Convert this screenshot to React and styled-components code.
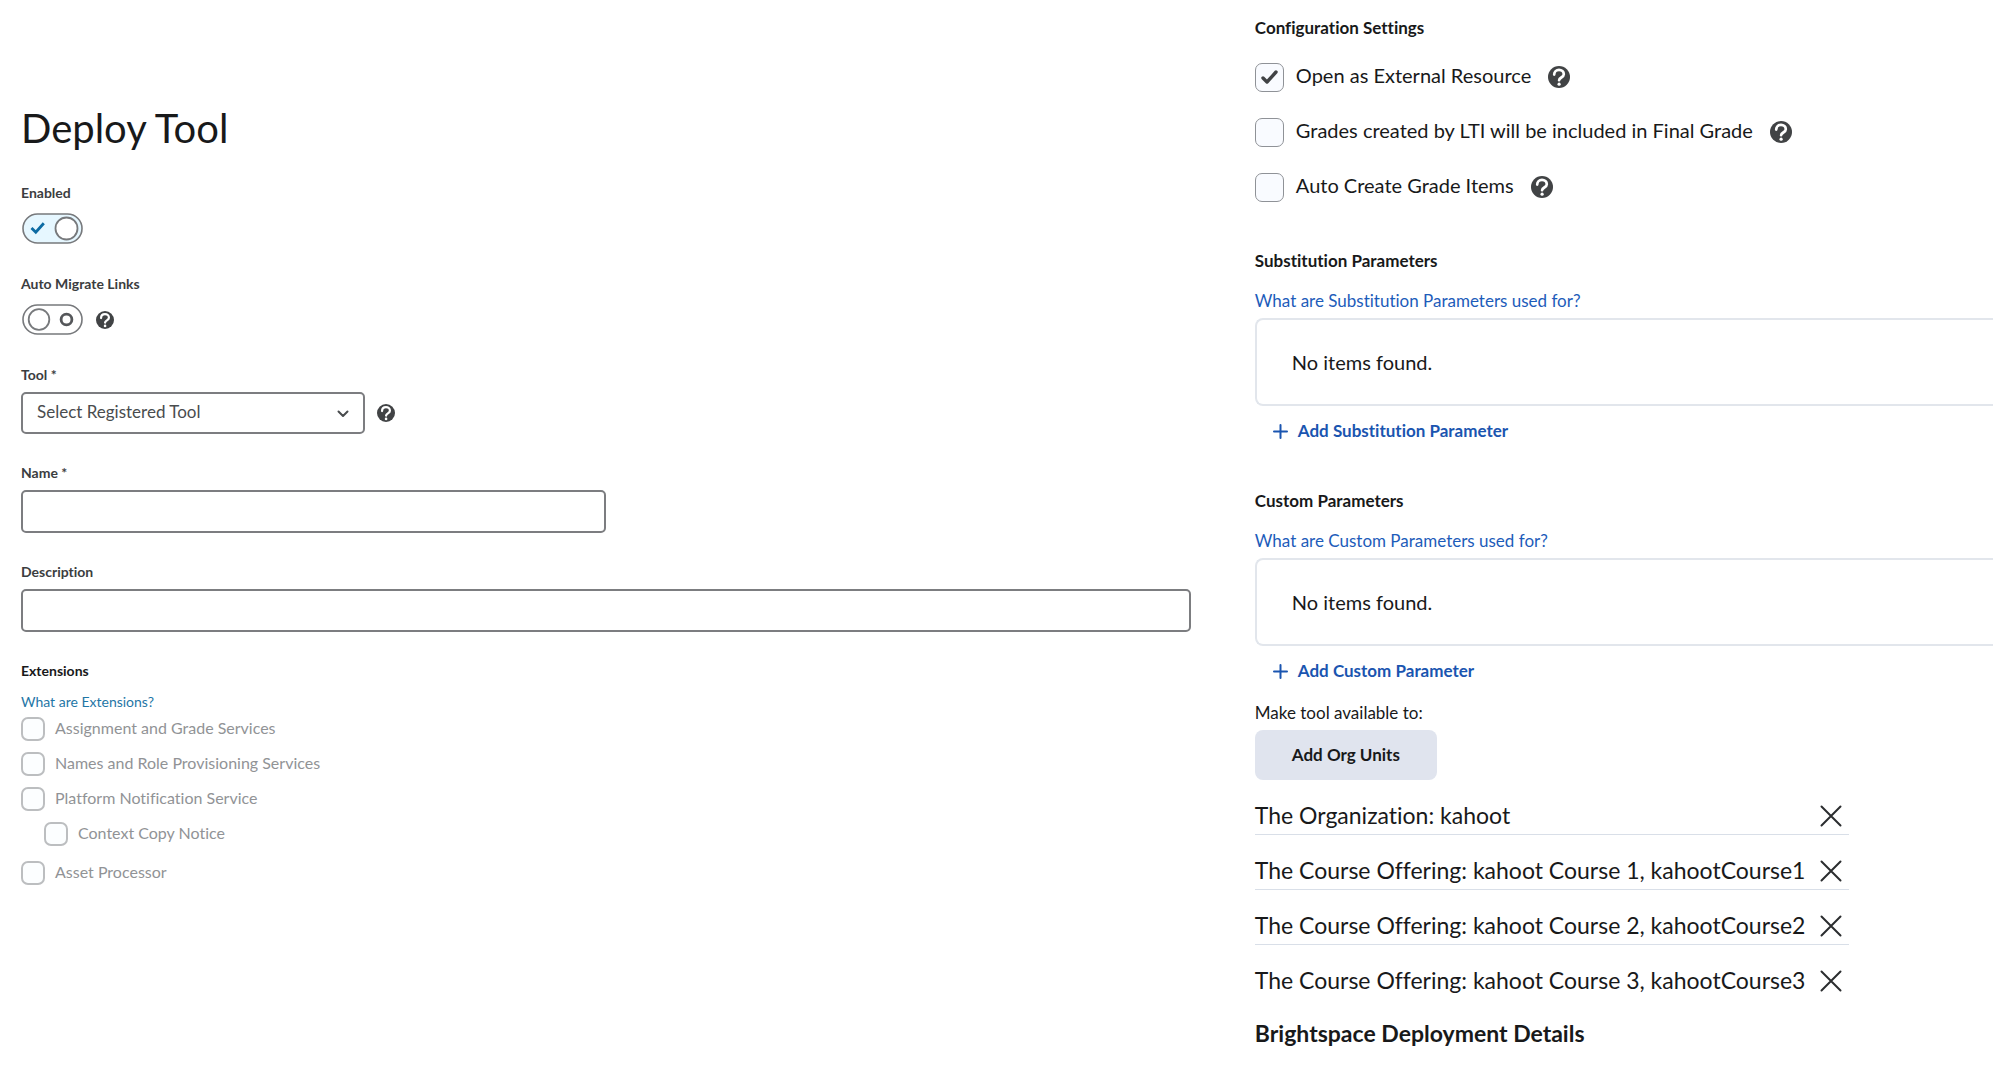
import React from "react";
import styled, { createGlobalStyle } from "styled-components";

const GlobalStyle = createGlobalStyle`
  * {
    box-sizing: border-box;
  }
  body {
    margin: 0;
    background: #fff;
    color: #18191a;
    font-family: Lato, "Open Sans", sans-serif;
    font-variant-ligatures: none;
  }
  button, input, select {
    font-family: inherit;
    font-variant-ligatures: none;
  }
`;

const Page = styled.main`
  display: grid;
  grid-template-columns: 17fr 10fr;
  overflow: hidden;
`;

const DeployForm = styled.form`
  padding: 104px 64px 40px 21px;
`;

const Title = styled.h1`
  margin: 0 0 31px;
  font-size: 40px;
  line-height: 48px;
  font-weight: 400;
`;

const Field = styled.div`
  display: flex;
  flex-direction: column;
  align-items: flex-start;
  gap: ${(props) => (props.$toggle ? 10 : 7)}px;
  margin-bottom: ${(props) => (props.$toggle ? 30 : 29)}px;
`;

const FieldLabel = styled.label`
  font-size: 14px;
  line-height: 20px;
  font-weight: 700;
  color: #3b3d40;
`;

const Inline = styled.div`
  display: flex;
  align-items: center;
  gap: ${(props) => props.$gap}px;
`;

const ToggleBox = styled.span`
  position: relative;
  display: block;
  width: 62px;
  height: 31px;
  padding-left: 1px;
  > svg {
    display: block;
  }
`;

const HiddenInput = styled.input`
  position: absolute;
  inset: 0;
  width: 100%;
  height: 100%;
  margin: 0;
  opacity: 0;
  cursor: pointer;
`;

const HelpButton = styled.button`
  display: block;
  padding: 0;
  border: 0;
  background: none;
  cursor: pointer;
  > svg {
    display: block;
  }
`;

const SelectBox = styled.div`
  position: relative;
  width: 344px;
  > svg {
    position: absolute;
    right: 16px;
    top: 18px;
    pointer-events: none;
  }
`;

const Select = styled.select`
  appearance: none;
  display: block;
  width: 100%;
  height: 42px;
  padding: 0 40px 4px 14px;
  border: 2px solid #7c7d80;
  border-radius: 5px;
  background: #fff;
  color: #494c4e;
  font-size: 17px;
`;

const TextInput = styled.input`
  width: ${(props) => (props.$half ? "50%" : "100%")};
  height: 43px;
  padding: 0 15px;
  border: 2px solid #7c7d80;
  border-radius: 5px;
  background: #fff;
  font-size: 17px;
`;

const SmallHeading = styled.h2`
  margin: 0 0 11px;
  font-size: 14px;
  line-height: 20px;
  font-weight: 700;
`;

const SmallLink = styled.a`
  display: block;
  width: fit-content;
  margin-bottom: 5px;
  font-size: 14px;
  line-height: 20px;
  color: #1f76a6;
  text-decoration: none;
`;

const ExtensionList = styled.ul`
  display: flex;
  flex-direction: column;
  gap: 11px;
  margin: 0;
  padding: 0;
  list-style: none;
  ul {
    margin-top: 11px;
    padding: 0 0 4px 23px;
  }
`;

const CheckLabel = styled.label`
  display: flex;
  gap: ${(props) => (props.$large ? 12 : 10)}px;
  width: fit-content;
  font-size: ${(props) => (props.$large ? 20 : 16)}px;
  line-height: ${(props) => (props.$large ? 25 : 22)}px;
  color: ${(props) => (props.$large ? "#18191a" : "#919396")};
`;

const CheckBox = styled.span`
  position: relative;
  flex: none;
  width: ${(props) => (props.$large ? 29 : 24)}px;
  height: ${(props) => (props.$large ? 29 : 24)}px;
  > svg {
    position: absolute;
    left: 5px;
    top: 6px;
    pointer-events: none;
  }
`;

const CheckInput = styled.input`
  appearance: none;
  display: block;
  width: 100%;
  height: 100%;
  margin: 0;
  border: ${(props) => (props.$large ? "1px solid #8f9297" : "2px solid #bcbec0")};
  border-radius: 7px;
  background: ${(props) => (props.$large ? "#f9fbff" : "#fcfeff")};
`;

const Settings = styled.section`
  padding-top: 17px;
`;

const Heading = styled.h2`
  margin: 0;
  font-size: 17px;
  line-height: 22px;
  font-weight: 700;
`;

const CheckRows = styled.div`
  display: flex;
  flex-direction: column;
  gap: 26px;
  margin: 24px 0 48px;
`;

const SettingRow = styled.div`
  display: flex;
  align-items: flex-start;
  gap: 17px;
  height: 29px;
  ${HelpButton} {
    margin-top: 3px;
  }
`;

const ParamBlock = styled.section`
  margin-bottom: ${(props) => props.$bottom}px;
`;

const ParamLink = styled.a`
  display: block;
  width: fit-content;
  margin: 18px 0 6px;
  font-size: 17px;
  line-height: 22px;
  color: #1d5cba;
  text-decoration: none;
`;

const EmptyBox = styled.p`
  margin: 0;
  padding: 29px 35px;
  border: 2px solid #e2e6ec;
  border-right: 0;
  border-radius: 8px 0 0 8px;
  font-size: 20px;
  line-height: 26px;
`;

const AddButton = styled.button`
  display: flex;
  align-items: center;
  gap: 10px;
  margin-top: 14px;
  padding: 0 0 0 18px;
  border: 0;
  background: none;
  color: #1a55b0;
  font-size: 17px;
  line-height: 22px;
  font-weight: 700;
  cursor: pointer;
`;

const Note = styled.p`
  margin: 0 0 6px;
  font-size: 17px;
  line-height: 22px;
`;

const OrgButton = styled.button`
  display: block;
  height: 50px;
  padding: 0 37px;
  border: 0;
  border-radius: 8px;
  background: #e0e4ee;
  color: #18191a;
  font-size: 17px;
  line-height: 22px;
  font-weight: 700;
  cursor: pointer;
`;

const OrgList = styled.ul`
  width: 594px;
  margin: 0;
  padding: 0;
  list-style: none;
`;

const OrgItem = styled.li`
  display: flex;
  align-items: flex-end;
  justify-content: space-between;
  height: 55px;
  padding: 0 7px 4px 0;
  border-bottom: 1px solid #d9dfe8;
  font-size: 23px;
  line-height: 30px;
  white-space: nowrap;
  &:last-child {
    border-bottom-color: transparent;
  }
`;

const RemoveButton = styled.button`
  flex: none;
  padding: 0 0 3px;
  border: 0;
  background: none;
  cursor: pointer;
  > svg {
    display: block;
  }
`;

const DetailsHeading = styled.h2`
  margin: 18px 0;
  font-size: 23px;
  line-height: 30px;
  font-weight: 700;
`;

function Help({ size, label }) {
  return (
    <HelpButton type="button" aria-label={"Help: " + label}>
      <svg width={size} height={size} viewBox="0 0 22 22" fill="none">
        <circle cx="11" cy="11" r="11" fill="#414345" />
        <path
          d="M6.2 8.6C6.2 5.7 8.3 3.9 11 3.9s4.8 1.8 4.8 4.3c0 3.3-4.6 3.2-4.7 6"
          stroke="#fff"
          strokeWidth="2.7"
          strokeLinecap="round"
        />
        <circle cx="11.1" cy="18.2" r="1.6" fill="#fff" />
      </svg>
    </HelpButton>
  );
}

function Toggle({ id, defaultChecked }) {
  const [on, setOn] = React.useState(!!defaultChecked);

  return (
    <ToggleBox>
      <HiddenInput
        id={id}
        type="checkbox"
        role="switch"
        checked={on}
        onChange={(e) => setOn(e.target.checked)}
      />
      <svg width="61" height="31" viewBox="0 0 61 31" fill="none">
        <rect
          x="1"
          y="1"
          width="59"
          height="29"
          rx="14.5"
          fill={on ? "#e6f7ff" : "#fff"}
          stroke="#77797c"
          strokeWidth="1.6"
        />
        {on ? (
          <>
            <path d="M9.5 15l4.3 4.3 8-9" stroke="#0c6ba3" strokeWidth="2.8" />
            <circle
              cx="44.5"
              cy="15.5"
              r="11"
              fill="#fff"
              stroke="#77797c"
              strokeWidth="1.8"
            />
          </>
        ) : (
          <>
            <circle cx="17" cy="15.5" r="10.3" stroke="#77797c" strokeWidth="1.8" />
            <circle cx="44.5" cy="15.5" r="5.4" stroke="#55575a" strokeWidth="2.8" />
          </>
        )}
      </svg>
    </ToggleBox>
  );
}

function Check({ large, label, defaultChecked }) {
  const [checked, setChecked] = React.useState(!!defaultChecked);

  return (
    <CheckLabel $large={large}>
      <CheckBox $large={large}>
        <CheckInput
          type="checkbox"
          $large={large}
          checked={checked}
          onChange={(e) => setChecked(e.target.checked)}
        />
        {checked && (
          <svg width="19" height="16" viewBox="0 0 19 16" fill="none">
            <path
              d="M3 9l4 4 9-10"
              stroke="#414345"
              strokeWidth="3.4"
              strokeLinecap="round"
              strokeLinejoin="round"
            />
          </svg>
        )}
      </CheckBox>
      {label}
    </CheckLabel>
  );
}

function Params({ name, bottom }) {
  return (
    <ParamBlock $bottom={bottom}>
      <Heading>{name} Parameters</Heading>
      <ParamLink href="#">What are {name} Parameters used for?</ParamLink>
      <EmptyBox>No items found.</EmptyBox>
      <AddButton type="button">
        <svg width="15" height="15" viewBox="0 0 15 15" fill="none">
          <path
            d="M7.5 1v13M1 7.5h13"
            stroke="#1a55b0"
            strokeWidth="2"
            strokeLinecap="round"
          />
        </svg>
        Add {name} Parameter
      </AddButton>
    </ParamBlock>
  );
}

const settings = [
  { label: "Open as External Resource", checked: true },
  { label: "Grades created by LTI will be included in Final Grade" },
  { label: "Auto Create Grade Items" },
];

const orgUnits = [
  "The Organization: kahoot",
  "The Course Offering: kahoot Course 1, kahootCourse1",
  "The Course Offering: kahoot Course 2, kahootCourse2",
  "The Course Offering: kahoot Course 3, kahootCourse3",
];

function App() {
  return (
    <>
      <GlobalStyle />
      <Page>
        <DeployForm>
          <Title>Deploy Tool</Title>
          <Field $toggle>
            <FieldLabel htmlFor="enabled">Enabled</FieldLabel>
            <Toggle id="enabled" defaultChecked />
          </Field>
          <Field $toggle>
            <FieldLabel htmlFor="migrate">Auto Migrate Links</FieldLabel>
            <Inline $gap={13}>
              <Toggle id="migrate" />
              <Help size={18} label="Auto Migrate Links" />
            </Inline>
          </Field>
          <Field>
            <FieldLabel htmlFor="tool">Tool *</FieldLabel>
            <Inline $gap={12}>
              <SelectBox>
                <Select id="tool">
                  <option>Select Registered Tool</option>
                </Select>
                <svg width="12" height="8" viewBox="0 0 12 8" fill="none">
                  <path
                    d="M1.5 1.5L6 6l4.5-4.5"
                    stroke="#494c4e"
                    strokeWidth="2"
                    strokeLinecap="round"
                    strokeLinejoin="round"
                  />
                </svg>
              </SelectBox>
              <Help size={18} label="Tool" />
            </Inline>
          </Field>
          <Field>
            <FieldLabel htmlFor="name">Name *</FieldLabel>
            <TextInput id="name" type="text" $half />
          </Field>
          <Field>
            <FieldLabel htmlFor="description">Description</FieldLabel>
            <TextInput id="description" type="text" />
          </Field>
          <SmallHeading>Extensions</SmallHeading>
          <SmallLink href="#">What are Extensions?</SmallLink>
          <ExtensionList>
            <li>
              <Check label="Assignment and Grade Services" />
            </li>
            <li>
              <Check label="Names and Role Provisioning Services" />
            </li>
            <li>
              <Check label="Platform Notification Service" />
              <ExtensionList>
                <li>
                  <Check label="Context Copy Notice" />
                </li>
              </ExtensionList>
            </li>
            <li>
              <Check label="Asset Processor" />
            </li>
          </ExtensionList>
        </DeployForm>

        <Settings>
          <Heading>Configuration Settings</Heading>
          <CheckRows>
            {settings.map((item) => (
              <SettingRow key={item.label}>
                <Check large label={item.label} defaultChecked={item.checked} />
                <Help size={22} label={item.label} />
              </SettingRow>
            ))}
          </CheckRows>
          <Params name="Substitution" bottom={48} />
          <Params name="Custom" bottom={20} />
          <Note>Make tool available to:</Note>
          <OrgButton type="button">Add Org Units</OrgButton>
          <OrgList>
            {orgUnits.map((unit) => (
              <OrgItem key={unit}>
                {unit}
                <RemoveButton type="button" aria-label={"Remove " + unit}>
                  <svg width="22" height="22" viewBox="0 0 22 22" fill="none">
                    <path
                      d="M1.5 1.5l19 19M20.5 1.5l-19 19"
                      stroke="#2b2d2f"
                      strokeWidth="2"
                      strokeLinecap="round"
                    />
                  </svg>
                </RemoveButton>
              </OrgItem>
            ))}
          </OrgList>
          <DetailsHeading>Brightspace Deployment Details</DetailsHeading>
        </Settings>
      </Page>
    </>
  );
}

export default App;
